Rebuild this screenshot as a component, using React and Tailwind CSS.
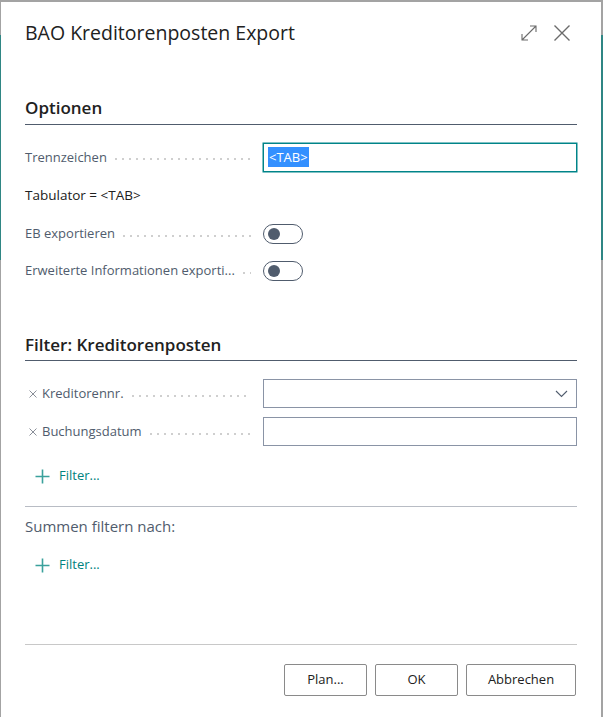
import React from "react";

const font = { fontFamily: '"Open Sans", "Noto Sans", sans-serif' };

const Leader = () => (
  <span className="ml-2 mt-1 h-[2px] flex-1 self-center bg-[linear-gradient(to_right,#cfcfcf_2px,transparent_2px)] bg-[length:7px_2px] bg-repeat-x" />
);

const Toggle = () => (
  <div className="flex h-[20px] w-[40px] items-center rounded-full border border-[#505c6d] bg-white pl-[4px]">
    <div className="h-[12px] w-[12px] rounded-full bg-[#505c6d]" />
  </div>
);

const Row = ({ label, children, removable }) => (
  <div className="flex items-center">
    <div className="flex w-[226px] items-center text-[13px] text-[#505c6d]">
      {removable && (
        <svg className="ml-[4px] mr-[5px]" width="8" height="8" viewBox="0 0 8 8" fill="none" stroke="#8a8f99" strokeWidth="1">
          <path d="M0.5 0.5l7 7M7.5 0.5l-7 7" />
        </svg>
      )}
      <span className="whitespace-nowrap">{label}</span>
      <Leader />
    </div>
    <div className="ml-[12px] flex-1">{children}</div>
  </div>
);

const AddFilter = () => (
  <button className="flex items-center gap-[9px] pl-[10px] text-[13px] text-[#00827e]">
    <svg width="15" height="15" viewBox="0 0 15 15">
      <path d="M7.5 0.5v14M0.5 7.5h14" stroke="#3aa19c" strokeWidth="1.6" fill="none" />
    </svg>
    <span>Filter...</span>
  </button>
);

const Section = ({ title }) => (
  <div className="border-b border-[#505c6d] pb-[3px]">
    <h2 className="text-[17px] font-semibold text-[#212121]">{title}</h2>
  </div>
);

const Btn = ({ children, w }) => (
  <button className={"h-[32px] rounded-[2px] border border-[#8a8a8a] bg-white text-[13px] text-[#212121] " + w}>
    {children}
  </button>
);

export default function App() {
  return (
    <div style={font} className="h-[717px] w-[603px] bg-[linear-gradient(to_bottom,#a3a3a3_0px,#a3a3a3_35px,#2f8684_35px,#2f8684_260px,#a3a3a3_260px)] pl-[1px] pt-[2px]">
      <div className="flex h-[715px] w-[600px] flex-col bg-white px-[24px]">
        <div className="flex items-center justify-between pt-[16px]">
          <h1 className="text-[19.5px] text-[#212121]">BAO Kreditorenposten Export</h1>
          <div className="flex items-center gap-[15px] pr-[6px] text-[#6b6b6b]">
            <svg width="18" height="18" viewBox="0 0 18 18" fill="none" stroke="#6b6b6b" strokeWidth="1.1">
              <path d="M2 16L16 2M10 2h6v6M2 10v6h6" />
            </svg>
            <svg width="18" height="18" viewBox="0 0 18 18" fill="none" stroke="#6b6b6b" strokeWidth="1.4">
              <path d="M1.5 1.5l15 15M16.5 1.5l-15 15" />
            </svg>
          </div>
        </div>

        <div className="mt-[48px]">
          <Section title="Optionen" />
        </div>

        <div className="mt-[18px]">
          <Row label="Trennzeichen">
            <div className="flex h-[29px] items-center border border-[#008489] px-[4px] ring-[0.5px] ring-[#008489]">
              <span className="bg-[#3390ff] px-[1px] text-[13px] leading-[20px] text-white">&lt;TAB&gt;</span>
            </div>
          </Row>
        </div>
        <div className="mt-[14px] text-[13.5px] leading-[19px] text-[#212121]">Tabulator = &lt;TAB&gt;</div>
        <div className="mt-[19px]">
          <Row label="EB exportieren">
            <Toggle />
          </Row>
        </div>
        <div className="mt-[17px]">
          <Row label="Erweiterte Informationen exporti...">
            <Toggle />
          </Row>
        </div>

        <div className="mt-[51px]">
          <Section title="Filter: Kreditorenposten" />
        </div>

        <div className="mt-[18px]">
          <Row label="Kreditorennr." removable>
            <div className="flex h-[29px] items-center justify-end border border-[#8a94a6] pr-[8px]">
              <svg width="13" height="8" viewBox="0 0 13 8" fill="none" stroke="#505c6d" strokeWidth="1.1">
                <path d="M1 1l5.5 5.5L12 1" />
              </svg>
            </div>
          </Row>
        </div>
        <div className="mt-[9px]">
          <Row label="Buchungsdatum" removable>
            <div className="h-[29px] border border-[#8a94a6]" />
          </Row>
        </div>

        <div className="mt-[20px]">
          <AddFilter />
        </div>

        <div className="mt-[20px] border-t border-[#b8bcc4]" />
        <div className="mt-[8px] text-[15px] text-[#505c6d]">Summen filtern nach:</div>
        <div className="mt-[18px]">
          <AddFilter />
        </div>

        <div className="mt-auto border-t border-[#c8c8c8]" />
        <div className="flex justify-end gap-[8px] pb-[21px] pt-[19px] pr-[1px]">
          <Btn w="w-[83px]">Plan...</Btn>
          <Btn w="w-[83px]">OK</Btn>
          <Btn w="w-[110px]">Abbrechen</Btn>
        </div>
      </div>
    </div>
  );
}
